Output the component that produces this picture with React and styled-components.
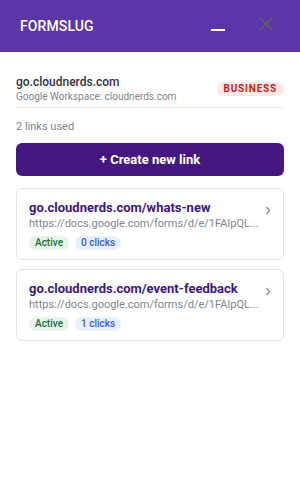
import React from 'react';
import styled, { createGlobalStyle } from 'styled-components';

const GlobalStyle = createGlobalStyle`
    html, body {
        margin: 0;
        padding: 0;
        background: #ffffff;
        font-family: Roboto, 'Liberation Sans', Arial, sans-serif;
    }
    * {
        box-sizing: border-box;
    }
`;

const Page = styled.div`
    width: 300px;
    height: 499px;
    background: #fff;
`;

const Header = styled.header`
    height: 52px;
    background: #5b36a8;
    display: flex;
    align-items: center;
    padding: 0 27px 0 20px;
`;

const Title = styled.h1`
    margin: 0;
    flex: 1;
    color: #fff;
    font-size: 14px;
    font-weight: 500;
    letter-spacing: 0.1px;
`;

const IconButton = styled.button`
    border: none;
    background: none;
    padding: 0;
    width: 14px;
    height: 14px;
    display: flex;
    margin: 0 0 4px ${({ gap }) => gap || 0}px;
    cursor: pointer;
`;

const Body = styled.main`
    padding: 23px 16px;
`;

const Account = styled.div`
    display: flex;
    align-items: center;
    justify-content: space-between;
    padding-bottom: 4px;
    border-bottom: 1px solid #ececec;
`;

const AccountName = styled.div`
    font-size: 12px;
    font-weight: 500;
    color: #333;
    line-height: 15px;
`;

const AccountSub = styled.div`
    font-size: 10px;
    color: #80868b;
    line-height: 13px;
`;

const PlanBadge = styled.span`
    background: #fce8e6;
    color: #c5221f;
    font-size: 10px;
    font-weight: 700;
    letter-spacing: 0.8px;
    padding: 1px 7px;
    border-radius: 8px;
    line-height: 12px;
`;

const Usage = styled.div`
    font-size: 11px;
    color: #80868b;
    line-height: 13px;
    margin-top: 12px;
`;

const CreateButton = styled.button`
    width: 100%;
    height: 33px;
    margin-top: 10px;
    border: none;
    border-radius: 6px;
    background: #45187f;
    color: #fff;
    font-family: inherit;
    font-size: 13px;
    font-weight: 700;
    cursor: pointer;
`;

const LinkList = styled.div`
    display: flex;
    flex-direction: column;
    gap: 9px;
    margin-top: 12px;
`;

const Card = styled.div`
    border: 1px solid #e3e3e3;
    border-radius: 6px;
    padding: 11px 12px 9px 12px;
    display: flex;
    align-items: flex-start;
`;

const CardMain = styled.div`
    flex: 1;
    min-width: 0;
`;

const Slug = styled.div`
    font-size: 13px;
    font-weight: 700;
    color: #3c1878;
    line-height: 16px;
`;

const Target = styled.div`
    font-size: 11px;
    color: #80868b;
    line-height: 15px;
    white-space: nowrap;
`;

const Chips = styled.div`
    display: flex;
    gap: 6px;
    margin-top: 5px;
`;

const Chip = styled.span`
    font-size: 10px;
    font-weight: 500;
    line-height: 14px;
    padding: 0 6px;
    border-radius: 7px;
    background: ${({ kind }) => (kind === 'status' ? '#e6f4ea' : '#e8f0fe')};
    color: ${({ kind }) => (kind === 'status' ? '#1e6b34' : '#2f5ed8')};
`;

const Chevron = styled.div`
    width: 6px;
    margin-left: 8px;
    margin-top: 6px;
    display: flex;
`;

const links = [
    { slug: 'whats-new', clicks: 0 },
    { slug: 'event-feedback', clicks: 1 },
];

const App = () => {
    return (
        <Page>
            <GlobalStyle />
            <Header>
                <Title>FORMSLUG</Title>
                <IconButton aria-label='Minimize'>
                    <svg width='14' height='14' viewBox='0 0 14 14'>
                        <rect x='0' y='12' width='14' height='2' fill='#fff' />
                    </svg>
                </IconButton>
                <IconButton aria-label='Close' gap={34}>
                    <svg width='14' height='14' viewBox='0 0 14 14'>
                        <path
                            d='M1 1 L13 13 M13 1 L1 13'
                            stroke='#5f5f5f'
                            strokeWidth='1.6'
                        />
                    </svg>
                </IconButton>
            </Header>
            <Body>
                <Account>
                    <div>
                        <AccountName>go.cloudnerds.com</AccountName>
                        <AccountSub>Google Workspace: cloudnerds.com</AccountSub>
                    </div>
                    <PlanBadge>BUSINESS</PlanBadge>
                </Account>
                <Usage>2 links used</Usage>
                <CreateButton>+ Create new link</CreateButton>
                <LinkList>
                    {links.map((link) => (
                        <Card key={link.slug}>
                            <CardMain>
                                <Slug>go.cloudnerds.com/{link.slug}</Slug>
                                <Target>https://docs.google.com/forms/d/e/1FAIpQL...</Target>
                                <Chips>
                                    <Chip kind='status'>Active</Chip>
                                    <Chip kind='clicks'>{link.clicks} clicks</Chip>
                                </Chips>
                            </CardMain>
                            <Chevron>
                                <svg width='6' height='9' viewBox='0 0 6 9'>
                                    <path
                                        d='M1.5 1 L4.5 4.5 L1.5 8'
                                        fill='none'
                                        stroke='#8a8a8a'
                                        strokeWidth='1.3'
                                    />
                                </svg>
                            </Chevron>
                        </Card>
                    ))}
                </LinkList>
            </Body>
        </Page>
    );
};

export default App;
